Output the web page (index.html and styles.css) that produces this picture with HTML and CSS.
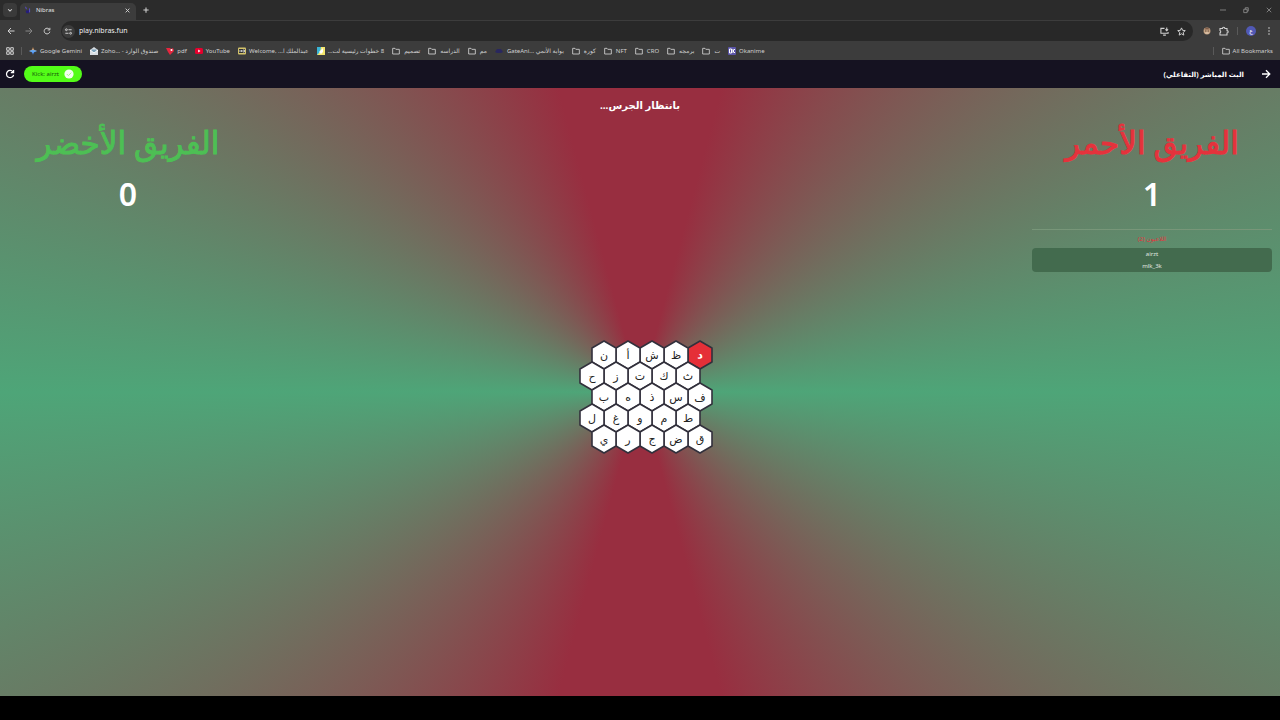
FILE: index.html
```html
<!DOCTYPE html>
<html lang="ar">
<head>
<meta charset="utf-8">
<title>Nibras</title>
<link rel="stylesheet" href="styles.css">
</head>
<body>
<svg class="defs" width="0" height="0" aria-hidden="true">
  <symbol id="folder" viewBox="0 0 12 12"><path d="M1 2h3.500l1.200 1.500h5.300v7H1z" fill="none" stroke="currentColor" stroke-width="1.300" stroke-linejoin="round"/></symbol>
  <symbol id="hex" viewBox="0 0 24 28" overflow="visible"><polygon points="12,0 24,7 24,21 12,28 0,21 0,7" stroke="#32303c" stroke-width="1.6" stroke-linejoin="round"/></symbol>
  <symbol id="reload" viewBox="0 0 12 12"><path d="M9.6 3.6A4.3 4.3 0 1 0 10.3 7M10.3 1.2v3.2H7" fill="none" stroke="currentColor" stroke-width="1.5"/></symbol>
</svg>
<header class="browser" dir="ltr">
  <div class="tabs">
    <button class="tab-menu" aria-label="Search tabs"><svg viewBox="0 0 8 8" width="6" height="6"><path d="M1.5 3L4 5.5 6.500 3" fill="none" stroke="currentColor" stroke-width="1.4"/></svg></button>
    <div class="tab">
      <svg viewBox="0 0 10 10" width="8" height="8"><path d="M2 1l1 3M7 3v5" stroke="#5a4ed0" stroke-width="1.2"/><path d="M2 6l4-1v4H3z" fill="#241c7c"/></svg>
      <span class="tab-title">Nibras</span>
      <button class="icon" aria-label="Close tab"><svg viewBox="0 0 8 8" width="5" height="5"><path d="M1 1l6 6M7 1L1 7" stroke="currentColor" stroke-width="1.5"/></svg></button>
    </div>
    <button class="icon new-tab" aria-label="New tab"><svg viewBox="0 0 8 8" width="6" height="6"><path d="M4 .5v7M.5 4h7" stroke="currentColor" stroke-width="1.400"/></svg></button>
    <div class="window-buttons">
      <button class="icon" aria-label="Minimize"><svg viewBox="0 0 8 8" width="6" height="6"><path d="M0 4h8" stroke="currentColor"/></svg></button>
      <button class="icon" aria-label="Restore"><svg viewBox="0 0 8 8" width="6" height="6"><path d="M1 3h4.500v4.500H1zM3 3V1h4v4.500H5.500" fill="none" stroke="currentColor"/></svg></button>
      <button class="icon" aria-label="Close"><svg viewBox="0 0 8 8" width="6" height="6"><path d="M1 1l6 6M7 1L1 7" stroke="currentColor"/></svg></button>
    </div>
  </div>
  <div class="toolbar">
    <button class="icon" aria-label="Back"><svg viewBox="0 0 8 8" width="8" height="8"><path d="M7.500 4H1.200M4 1L1 4l3 3" fill="none" stroke="currentColor"/></svg></button>
    <button class="icon dim" aria-label="Forward"><svg viewBox="0 0 8 8" width="8" height="8"><path d="M.5 4h6.300M4 1l3 3-3 3" fill="none" stroke="currentColor"/></svg></button>
    <button class="icon" aria-label="Reload"><svg width="8" height="8"><use href="#reload"/></svg></button>
    <div class="address">
      <span class="site-info"><svg viewBox="0 0 10 10" width="7" height="7"><g fill="none" stroke="currentColor" stroke-width="1.400"><path d="M5 2.500h4.500M.5 7.500H5"/><circle cx="2" cy="2.500" r="1.300"/><circle cx="8" cy="7.500" r="1.300"/></g></svg></span>
      <input class="url" type="text" aria-label="Address" value="play.nibras.fun">
      <button class="icon" aria-label="Install app"><svg viewBox="0 0 10 10" width="9" height="9"><path d="M5 1.500H1v5.500h8V5.500M3.500 9h3M7.500 .5v3.500M6 2.700l1.500 1.500L9 2.700" fill="none" stroke="currentColor" stroke-width="1.200"/></svg></button>
      <button class="icon" aria-label="Bookmark"><svg viewBox="0 0 10 10" width="9" height="9"><path d="M5 1l1.200 2.700 3 .3-2.300 2 .7 3L5 7.500 2.400 9l.7-3L.8 4l3-.3z" fill="none" stroke="currentColor" stroke-width="1.100"/></svg></button>
    </div>
    <div class="extensions">
      <button class="icon" aria-label="Extension"><svg viewBox="0 0 10 10" width="8" height="8"><circle cx="5" cy="5" r="4.300" fill="#c6a484"/><path d="M1.500 3Q5-1.500 8.500 3z" fill="#7d5b48"/><path d="M2.500 5h1.800M5.800 5h1.800" stroke="#42332c"/><path d="M3 7.500h4" stroke="#eee0ce"/></svg></button>
      <button class="icon" aria-label="Extensions"><svg viewBox="0 0 10 10" width="10" height="10"><path d="M1 2.500h2.500a1.200 1.200 0 0 1 2.400 0H8V4.600a1.200 1.200 0 0 1 0 2.400V9H1V6.800a1.200 1.200 0 0 0 0-2.200z" fill="none" stroke="currentColor" stroke-width="1.100"/></svg></button>
      <i class="rule"></i>
      <button class="profile" aria-label="Profile">ع</button>
      <button class="icon menu" aria-label="Menu"><svg viewBox="0 0 8 8" width="8" height="8"><g fill="currentColor"><circle cx="4" cy="1" r=".8"/><circle cx="4" cy="4" r=".8"/><circle cx="4" cy="7" r=".8"/></g></svg></button>
    </div>
  </div>
  <nav class="bookmarks">
    <button class="icon" aria-label="Apps"><svg viewBox="0 0 8 8" width="8" height="8"><path d="M.7.7h2.600v2.600H.7zM4.700.7h2.600v2.600H4.700zM.7 4.700h2.600v2.600H.7zM4.700 4.700h2.600v2.600H4.700z" fill="none" stroke="currentColor"/></svg></button>
    <i class="rule first"></i>
    <a class="mark" href="#"><svg viewBox="0 0 8 8"><path d="M4 0Q4.400 3.600 8 4H0Q3.600 3.600 4 0z" fill="#f0a45a"/><path d="M0 4h8Q4.400 4.400 4 8 3.600 4.400 0 4z" fill="#4c8df6"/><path d="M0 4l4-1.500L8 4 4 5.500z" fill="#64a6ef"/></svg><span>Google Gemini</span></a>
    <a class="mark" href="#"><svg viewBox="0 0 8 8"><path d="M0 3l4-3 4 3v5H0z" fill="#d8dde2"/><path d="M1.500 2.500h5v2L4 6 1.500 4.500z" fill="#7aa2ba"/><path d="M0 3l4 3 4-3" fill="none" stroke="#fff"/></svg><span>Zoho... - صندوق الوارد</span></a>
    <a class="mark" href="#"><svg viewBox="0 0 8 8"><path d="M0 1h4l1 1 2-1 1 3-4 4-2-3z" fill="#e5263e"/><circle cx="5.500" cy="3" r="1" fill="#fff"/></svg><span>pdf</span></a>
    <a class="mark" href="#"><svg viewBox="0 0 8 8"><rect y="1" width="8" height="6" rx="1.500" fill="#e6002d"/><path d="M3.200 2.500L5.500 4 3.200 5.500z" fill="#fff"/></svg><span>YouTube</span></a>
    <a class="mark" href="#"><svg viewBox="0 0 8 8"><rect y=".5" width="8" height="7" rx="1" fill="#d4c36a"/><path d="M1 2h6v4H1z" fill="#333"/><path d="M2 3v2M3.500 3v2M5 3h1.500v2H5z" stroke="#fff" stroke-width=".7"/></svg><span>Welcome, ...عبدالملك ا</span></a>
    <a class="mark" href="#"><svg viewBox="0 0 8 8"><path d="M0 0h8v8H0z" fill="#f4e66d"/><path d="M0 0h4L3 5 0 8z" fill="#39b4d5"/><path d="M2 5l4-4v4L4 7z" fill="#fff"/></svg><span dir="rtl">8 خطوات رئيسية لت...</span></a>
    <a class="mark folder" href="#"><svg><use href="#folder"/></svg><span>تصميم</span></a>
    <a class="mark folder" href="#"><svg><use href="#folder"/></svg><span>الدراسه</span></a>
    <a class="mark folder" href="#"><svg><use href="#folder"/></svg><span>مم</span></a>
    <a class="mark folder" href="#"><svg viewBox="0 0 8 8"><path d="M0 5l2-3h4l2 3-2 1H2z" fill="#29275e"/></svg><span>GateAni... بوابة الأنمي</span></a>
    <a class="mark folder" href="#"><svg><use href="#folder"/></svg><span>كورة</span></a>
    <a class="mark folder" href="#"><svg><use href="#folder"/></svg><span>NFT</span></a>
    <a class="mark folder" href="#"><svg><use href="#folder"/></svg><span>CRO</span></a>
    <a class="mark folder" href="#"><svg><use href="#folder"/></svg><span>برمجه</span></a>
    <a class="mark folder" href="#"><svg><use href="#folder"/></svg><span>ت</span></a>
    <a class="mark" href="#"><svg viewBox="0 0 8 8"><rect width="8" height="8" rx="1" fill="#5b55a8"/><path d="M1.500 2v4h2V2zM5 2v4M7 2L5 4l2 2" fill="none" stroke="#fff"/></svg><span>Okanime</span></a>
    <i class="rule last"></i>
    <a class="mark" href="#"><svg><use href="#folder"/></svg><span>All Bookmarks</span></a>
  </nav>
</header>
<div class="appbar" dir="rtl">
  <button class="icon" aria-label="رجوع"><svg viewBox="0 0 10 10" width="10" height="10"><path d="M1 5h7.500M5 1.200L8.800 5 5 8.800" fill="none" stroke="currentColor" stroke-width="1.300"/></svg></button>
  <h1 class="page-title">البث المباشر (التفاعلي)</h1>
  <button class="kick" dir="ltr">Kick: airzt <svg viewBox="0 0 10 10" width="10" height="10"><circle cx="5" cy="5" r="4.600" fill="#f2fff0"/><path d="M2.800 5l1.600 1.600L7.300 3.600" fill="none" stroke="#a5f58e"/></svg></button>
  <button class="icon" aria-label="تحديث"><svg width="10" height="10"><use href="#reload"/></svg></button>
</div>
<main class="stage" dir="rtl">
  <section class="team red">
    <h2 class="team-name">الفريق الأحمر</h2>
    <p class="score">1</p>
    <div class="players">
      <h3 class="players-title">اللاعبون (2)</h3>
      <ul class="player-list"><li>airzt</li><li>mlk_3k</li></ul>
    </div>
  </section>
  <section class="center">
    <p class="status">بانتظار الجرس...</p>
    <div class="board">
      <div class="row odd"><button class="cell won"><svg><use href="#hex"/></svg><span>د</span></button><button class="cell"><svg><use href="#hex"/></svg><span>ظ</span></button><button class="cell"><svg><use href="#hex"/></svg><span>ش</span></button><button class="cell"><svg><use href="#hex"/></svg><span>أ</span></button><button class="cell"><svg><use href="#hex"/></svg><span>ن</span></button></div>
      <div class="row"><button class="cell"><svg><use href="#hex"/></svg><span>ث</span></button><button class="cell"><svg><use href="#hex"/></svg><span>ك</span></button><button class="cell"><svg><use href="#hex"/></svg><span>ت</span></button><button class="cell"><svg><use href="#hex"/></svg><span>ز</span></button><button class="cell"><svg><use href="#hex"/></svg><span>ح</span></button></div>
      <div class="row odd"><button class="cell"><svg><use href="#hex"/></svg><span>ف</span></button><button class="cell"><svg><use href="#hex"/></svg><span>س</span></button><button class="cell"><svg><use href="#hex"/></svg><span>ذ</span></button><button class="cell"><svg><use href="#hex"/></svg><span>ه</span></button><button class="cell"><svg><use href="#hex"/></svg><span>ب</span></button></div>
      <div class="row"><button class="cell"><svg><use href="#hex"/></svg><span>ط</span></button><button class="cell"><svg><use href="#hex"/></svg><span>م</span></button><button class="cell"><svg><use href="#hex"/></svg><span>و</span></button><button class="cell"><svg><use href="#hex"/></svg><span>غ</span></button><button class="cell"><svg><use href="#hex"/></svg><span>ل</span></button></div>
      <div class="row odd"><button class="cell"><svg><use href="#hex"/></svg><span>ق</span></button><button class="cell"><svg><use href="#hex"/></svg><span>ض</span></button><button class="cell"><svg><use href="#hex"/></svg><span>ج</span></button><button class="cell"><svg><use href="#hex"/></svg><span>ر</span></button><button class="cell"><svg><use href="#hex"/></svg><span>ي</span></button></div>
    </div>
  </section>
  <section class="team green">
    <h2 class="team-name">الفريق الأخضر</h2>
    <p class="score">0</p>
  </section>
</main>
</body>
</html>
```
FILE: styles.css
```css
* { box-sizing: border-box; margin: 0; padding: 0; }
body {
  min-height: 100vh;
  display: flex;
  flex-direction: column;
  padding-bottom: 24px;
  background: #000;
  color: #fff;
  font-family: "Noto Sans", "DejaVu Sans", sans-serif;
}
button { border: 0; background: none; color: inherit; font: inherit; }
svg { display: block; overflow: visible; flex: none; }
.defs { position: absolute; }
.icon { display: flex; align-items: center; justify-content: center; }

.browser { background: #3c3c3c; color: #d0d0d0; font-size: 6px; line-height: 12px; }
.tabs { display: flex; align-items: center; height: 20px; background: #2b2b2b; padding-left: 3px; }
.tab-menu { display: flex; align-items: center; justify-content: center; width: 14px; height: 14px; border-radius: 4px; background: #3a3a3a; }
.tab { display: flex; align-items: center; align-self: flex-end; gap: 4px; width: 116px; height: 17px; margin-left: 3px; padding: 0 6px 3px 4px; border-radius: 5px 5px 0 0; background: #3c3c3c; }
.tab-title { flex: 1; color: #e4e4e4; }
.new-tab { margin-left: 7px; }
.window-buttons { display: flex; gap: 17px; margin-left: auto; padding-right: 8px; color: #999; }
.toolbar { display: flex; align-items: center; gap: 10px; height: 22px; padding: 0 7px; }
.dim { color: #858585; }
.address { display: flex; flex: 1; align-items: center; gap: 8px; height: 20px; padding: 0 7px 0 1px; border-radius: 10px; background: #282828; }
.site-info { display: flex; align-items: center; justify-content: center; width: 13px; height: 13px; border-radius: 7px; background: #3c3c3c; }
.url { flex: 1; min-width: 0; margin-left: -4px; border: 0; background: none; color: #eee; font: inherit; font-size: 7px; }
.extensions { display: flex; align-items: center; gap: 8px; }
.menu { margin-left: 1px; }
.rule { width: 1px; height: 8px; background: #5a5a5a; }
.first { margin: 0 -1px; }
.profile { width: 10px; height: 10px; border-radius: 5px; background: #5159b5; color: #fff; font-size: 6px; line-height: 8px; }
.bookmarks { display: flex; align-items: center; gap: 8px; height: 18px; padding: 0 7px 1px 6px; }
.mark { display: flex; align-items: center; gap: 3px; color: #d0d0d0; text-decoration: none; white-space: nowrap; }
.mark svg { width: 8px; height: 8px; }
.folder { gap: 4px; }
.last { margin-left: auto; }

.appbar { display: flex; align-items: center; height: 28px; padding: 0 9px 0 5px; background: #151221; }
.page-title { margin: 0 17px 0 auto; font-size: 7px; font-weight: 700; }
.kick { display: flex; align-items: center; gap: 5px; height: 16px; margin-left: 9px; padding: 0 8px; border-radius: 8px; background: #53fc18; color: #17520c; font-size: 6px; }

.stage {
  flex: 1;
  display: grid;
  grid-template-columns: 1fr 3fr 1fr;
  background: conic-gradient(#982e40 15deg, #4ea578 90deg, #982e40 165deg, #982e40 195deg, #4ea578 270deg, #982e40 345deg);
}
.team { display: flex; flex-direction: column; align-items: center; padding: 30px 8px; }
.team-name { font-size: 31px; line-height: 48px; font-weight: 400; -webkit-text-stroke: 1px; }
.red .team-name, .players-title { color: #e5323c; }
.green .team-name { color: #4dbf54; }
.score { font-size: 32px; line-height: 56px; font-weight: 600; }
.players { align-self: stretch; margin-top: 7px; border-top: 1px solid #789679; text-align: center; }
.players-title { font-size: 6px; line-height: 18px; font-weight: 400; }
.player-list { list-style: none; border-radius: 4px; background: #436b4e; color: #e0e8e0; font-size: 6px; line-height: 12px; }
.center { display: flex; flex-direction: column; align-items: center; padding-top: 8px; }
.status { font-size: 10px; line-height: 18px; font-weight: 700; }
.board { margin: auto; padding-bottom: 24px; font-size: 11px; }
.row { display: flex; height: 21px; }
.odd { margin: 0 -12px 0 12px; }
.cell { display: grid; place-items: center; width: 24px; height: 28px; color: #222; }
.cell > * { grid-area: 1 / 1; }
.cell svg { width: 24px; height: 28px; fill: #fff; }
.cell span { z-index: 1; line-height: 20px; }
.won { color: #fff; font-weight: 700; }
.won svg { fill: #e52f38; }
```
